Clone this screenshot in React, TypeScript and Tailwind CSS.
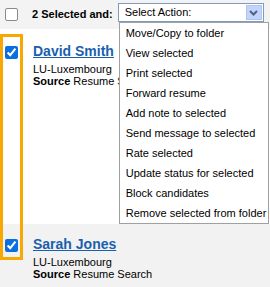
import React from "react"

const actions = [
  "Move/Copy to folder",
  "View selected",
  "Print selected",
  "Forward resume",
  "Add note to selected",
  "Send message to selected",
  "Rate selected",
  "Update status for selected",
  "Block candidates",
  "Remove selected from folder",
]

function Candidate({ name, bg, pt }: { name: string; bg: string; pt: string }) {
  return (
    <div className={`flex ${bg} ${pt}`}>
      <div className="w-[33px] pl-[5px]">
        <input
          type="checkbox"
          checked
          readOnly
          className="m-0 mt-[2px] w-[13px] h-[13px] accent-[#0b6fe0]"
        />
      </div>
      <div>
        <a
          href="#"
          className="block text-[14px] leading-[18px] font-bold text-[#1a5fae] underline mb-[3px]"
        >
          {name}
        </a>
        <div className="text-[11px] leading-[12px] text-black">LU-Luxembourg</div>
        <div className="text-[11px] leading-[12px] text-black">
          <span className="font-bold">Source</span> Resume Search
        </div>
      </div>
    </div>
  )
}

export default function App() {
  return (
    <div
      className="relative w-[270px] h-[287px] overflow-hidden bg-white"
      style={{ fontFamily: '"Liberation Sans", Arial, sans-serif' }}
    >
      <div className="flex items-center h-[29px] bg-[#f3f3f3]">
        <div className="ml-[5px] w-[13px] h-[13px] rounded-[2px] border border-[#8a8a8a] bg-white" />
        <span className="ml-[14px] text-[11px] font-bold text-black">2 Selected and:</span>

        <div className="relative ml-[5px] self-start mt-[3px]">
          <div className="flex items-center w-[146px] h-[19px] border border-[#7f9db9] bg-white">
            <span className="flex-1 pl-[6px] text-[11px] text-black">Select Action:</span>
            <div className="flex items-center justify-center w-[16px] h-[15px] mr-[1px] bg-[#c3d3fb] border border-[#b0c4f0]">
              <svg width="9" height="6" viewBox="0 0 9 6">
                <path d="M1 1 L4.5 4.5 L8 1" fill="none" stroke="#4d6185" strokeWidth="2" />
              </svg>
            </div>
          </div>

          <div className="absolute left-[1px] top-[19px] w-[150px] border border-[#a0a0a0] bg-white z-10">
            {actions.map((a) => (
              <div key={a} className="h-[20px] flex items-center pl-[6px] text-[11px] text-black whitespace-nowrap">
                {a}
              </div>
            ))}
          </div>
        </div>
      </div>

      <div className="h-[195px]">
        <Candidate name="David Smith" bg="bg-white" pt="pt-[13px]" />
      </div>
      <Candidate name="Sarah Jones" bg="bg-[#f2f2f2] h-[63px]" pt="pt-[11px]" />

      <div className="absolute left-0 top-[34px] w-[23px] h-[226px] border-[3px] border-[#f8a800] pointer-events-none" />
    </div>
  )
}
